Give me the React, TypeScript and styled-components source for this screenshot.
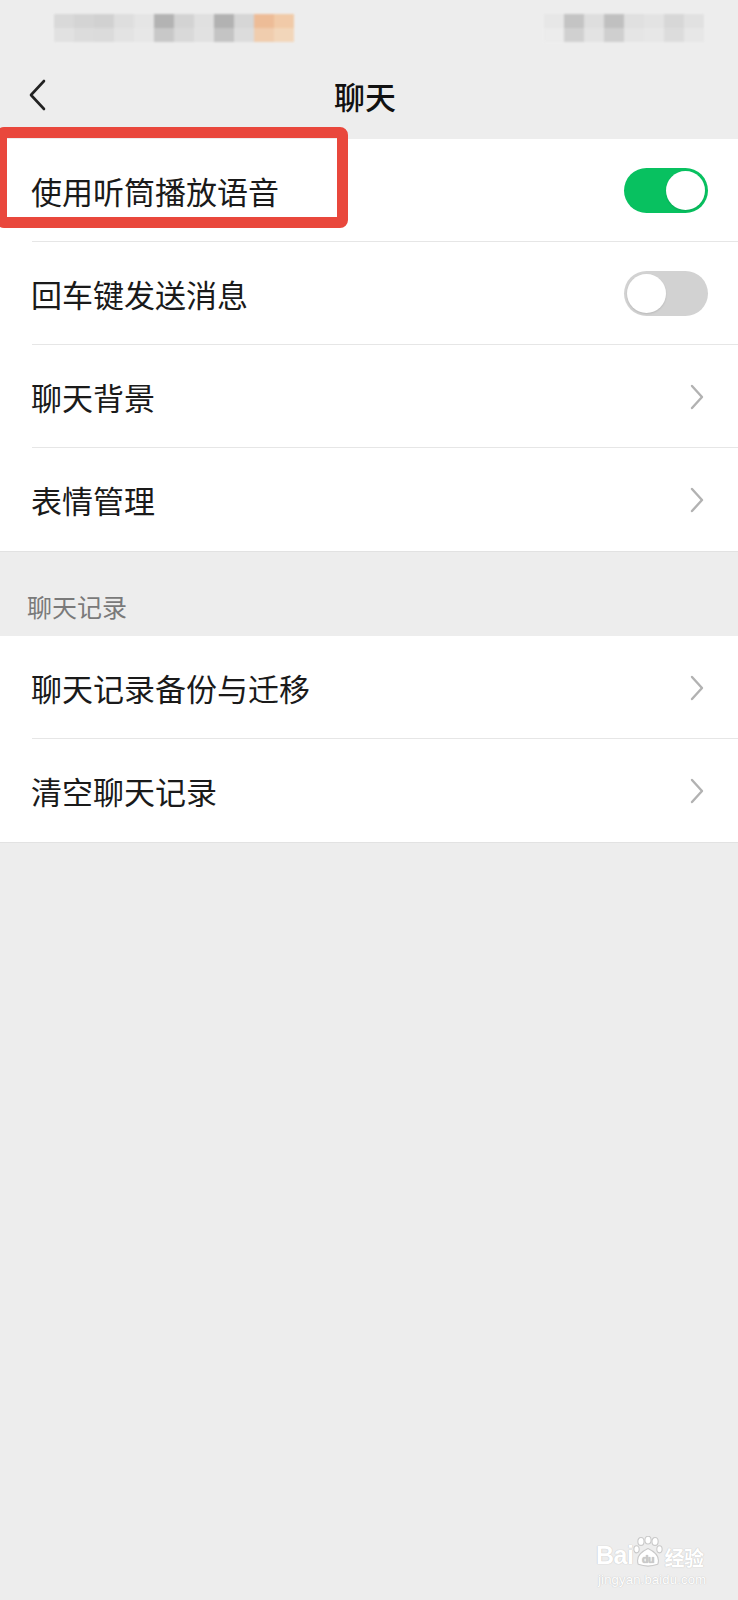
import styled, { createGlobalStyle } from "styled-components";

const GlobalStyle = createGlobalStyle`
  html, body {
    margin: 0;
    padding: 0;
    background: #ededed;
  }
  body {
    font-family: "Noto Sans CJK SC", "Noto Sans", sans-serif;
    color: #191919;
  }
`;

const Page = styled.div`
  position: relative;
  min-height: 1600px;
  background: #ededed;
  overflow: hidden;
`;

const StatusBar = styled.div`
  height: 60px;
  display: flex;
  justify-content: space-between;
  align-items: flex-start;
  padding: 14px 34px 0 54px;
  box-sizing: border-box;
`;

const Mosaic = styled.div<{ $cols: number }>`
  display: grid;
  grid-template-columns: repeat(${(p) => p.$cols}, 20px);
  grid-auto-rows: 14px;
  filter: blur(1.2px);
  opacity: 0.85;
`;

const Cell = styled.div<{ $c: string }>`
  background: ${(p) => p.$c};
`;

const Header = styled.div`
  position: relative;
  height: 79px;
  display: flex;
  align-items: center;
  justify-content: center;
`;

const BackButton = styled.div`
  position: absolute;
  left: 26px;
  top: 18px;
  width: 22px;
  height: 34px;
  display: flex;
`;

const Title = styled.div`
  font-size: 31px;
  font-weight: 500;
  color: #111;
  margin-top: -8px;
  margin-left: -8px;
`;

const Group = styled.div`
  background: #fff;
  border-bottom: 1px solid #e2e2e2;
`;

const Row = styled.div<{ $last?: boolean }>`
  position: relative;
  height: 103px;
  display: flex;
  align-items: center;
  padding: 0 30px 0 31px;
  box-sizing: border-box;
  &::after {
    content: "";
    display: ${(p) => (p.$last ? "none" : "block")};
    position: absolute;
    left: 32px;
    right: 0;
    bottom: 0;
    height: 1px;
    background: #e6e6e6;
  }
`;

const Label = styled.div`
  flex: 1;
  font-size: 31px;
  line-height: 1;
  color: #1a1a1a;
`;

const Switch = styled.div<{ $on: boolean }>`
  position: relative;
  width: 84px;
  height: 45px;
  border-radius: 23px;
  background: ${(p) => (p.$on ? "#08c160" : "#d2d2d2")};
  box-sizing: border-box;
`;

const Knob = styled.div<{ $on: boolean }>`
  position: absolute;
  top: 3px;
  left: ${(p) => (p.$on ? "42px" : "3px")};
  width: 39px;
  height: 39px;
  border-radius: 50%;
  background: #fff;
  box-shadow: 0 1px 2px rgba(0, 0, 0, 0.12);
`;

const Chevron = styled.div`
  width: 14px;
  height: 26px;
  margin-right: 4px;
  display: flex;
`;

const SectionTitle = styled.div`
  height: 84px;
  box-sizing: border-box;
  padding: 42px 0 0 27px;
  font-size: 25px;
  line-height: 1;
  color: #7a7a7a;
`;

const Highlight = styled.div`
  position: absolute;
  left: -4px;
  top: 127px;
  width: 352px;
  height: 101px;
  border: 11px solid #e9473c;
  border-radius: 8px;
  box-sizing: border-box;
  pointer-events: none;
`;

const Watermark = styled.div`
  position: absolute;
  left: 596px;
  top: 1536px;
  display: flex;
  flex-direction: column;
  align-items: flex-start;
  color: #fff;
  text-shadow: 0 0 1px #c9c9c9, 0 0 1px #c9c9c9;
  font-family: "Liberation Sans", "Noto Sans CJK SC", sans-serif;
`;

const LogoLine = styled.div`
  display: flex;
  align-items: flex-end;
  font-size: 25px;
  font-weight: 700;
  line-height: 1;
  letter-spacing: -0.5px;
`;

const LogoCn = styled.span`
  font-family: "Noto Sans CJK SC", sans-serif;
  font-size: 20px;
  font-weight: 700;
  margin-left: 1px;
`;

const Domain = styled.div`
  font-size: 13px;
  letter-spacing: 0.2px;
  margin-top: 4px;
  margin-left: 2px;
`;

const leftMosaic = [
  "#d6d6d6", "#d0d0d0", "#cdcdcd", "#dcdcdc", "#e4e4e4", "#a9a9a9", "#cfcfcf", "#dedede", "#a8a8a8", "#d2d2d2", "#eeb489", "#f2c59c",
  "#e0e0e0", "#dadada", "#d8d8d8", "#e2e2e2", "#e6e6e6", "#c2c2c2", "#d6d6d6", "#e0e0e0", "#bdbdbd", "#dadada", "#f1c8a4", "#f4d3b2",
];

const rightMosaic = [
  "#e6e6e6", "#bdbdbd", "#dcdcdc", "#b9b9b9", "#dedede", "#e2e2e2", "#d4d4d4", "#e0e0e0",
  "#ececec", "#cccccc", "#e2e2e2", "#cacaca", "#e4e4e4", "#e6e6e6", "#dadada", "#e6e6e6",
];

function Toggle({ on }: { on: boolean }) {
  return (
    <Switch $on={on}>
      <Knob $on={on} />
    </Switch>
  );
}

function Arrow() {
  return (
    <Chevron>
      <svg width="14" height="26" viewBox="0 0 14 26">
        <path d="M2 2 L12 13 L2 24" fill="none" stroke="#b2b2b2" strokeWidth="2.4" strokeLinecap="round" strokeLinejoin="round" />
      </svg>
    </Chevron>
  );
}

function Paw() {
  return (
    <svg width="30" height="32" viewBox="0 0 34 36">
      <g fill="#fff" stroke="#c9c9c9" strokeWidth="1.2">
        <ellipse cx="9" cy="6" rx="3.5" ry="4.5" />
        <ellipse cx="17" cy="4.5" rx="3.5" ry="4.5" />
        <ellipse cx="25" cy="6" rx="3.5" ry="4.5" />
        <ellipse cx="4" cy="15" rx="3" ry="4" />
        <ellipse cx="30" cy="15" rx="3" ry="4" />
        <path d="M6 32 Q2 21 17 14 Q32 21 28 32 Q17 36 6 32 Z" />
      </g>
      <text x="17" y="30" fontSize="12" fontWeight="700" textAnchor="middle" fill="#c9c9c9" fontFamily="Liberation Sans, sans-serif">du</text>
    </svg>
  );
}

export default function App() {
  return (
    <Page>
      <GlobalStyle />
      <StatusBar>
        <Mosaic $cols={12}>
          {leftMosaic.map((c, i) => (
            <Cell key={i} $c={c} />
          ))}
        </Mosaic>
        <Mosaic $cols={8}>
          {rightMosaic.map((c, i) => (
            <Cell key={i} $c={c} />
          ))}
        </Mosaic>
      </StatusBar>

      <Header>
        <BackButton>
          <svg width="22" height="34" viewBox="0 0 22 34">
            <path d="M18 3 L5 17 L18 31" fill="none" stroke="#222" strokeWidth="2.6" strokeLinecap="round" strokeLinejoin="round" />
          </svg>
        </BackButton>
        <Title>聊天</Title>
      </Header>

      <Group>
        <Row>
          <Label>使用听筒播放语音</Label>
          <Toggle on />
        </Row>
        <Row>
          <Label>回车键发送消息</Label>
          <Toggle on={false} />
        </Row>
        <Row>
          <Label>聊天背景</Label>
          <Arrow />
        </Row>
        <Row $last>
          <Label>表情管理</Label>
          <Arrow />
        </Row>
      </Group>

      <SectionTitle>聊天记录</SectionTitle>

      <Group>
        <Row>
          <Label>聊天记录备份与迁移</Label>
          <Arrow />
        </Row>
        <Row $last>
          <Label>清空聊天记录</Label>
          <Arrow />
        </Row>
      </Group>

      <Highlight />

      <Watermark>
        <LogoLine>
          Bai
          <Paw />
          <LogoCn>经验</LogoCn>
        </LogoLine>
        <Domain>jingyan.baidu.com</Domain>
      </Watermark>
    </Page>
  );
}
